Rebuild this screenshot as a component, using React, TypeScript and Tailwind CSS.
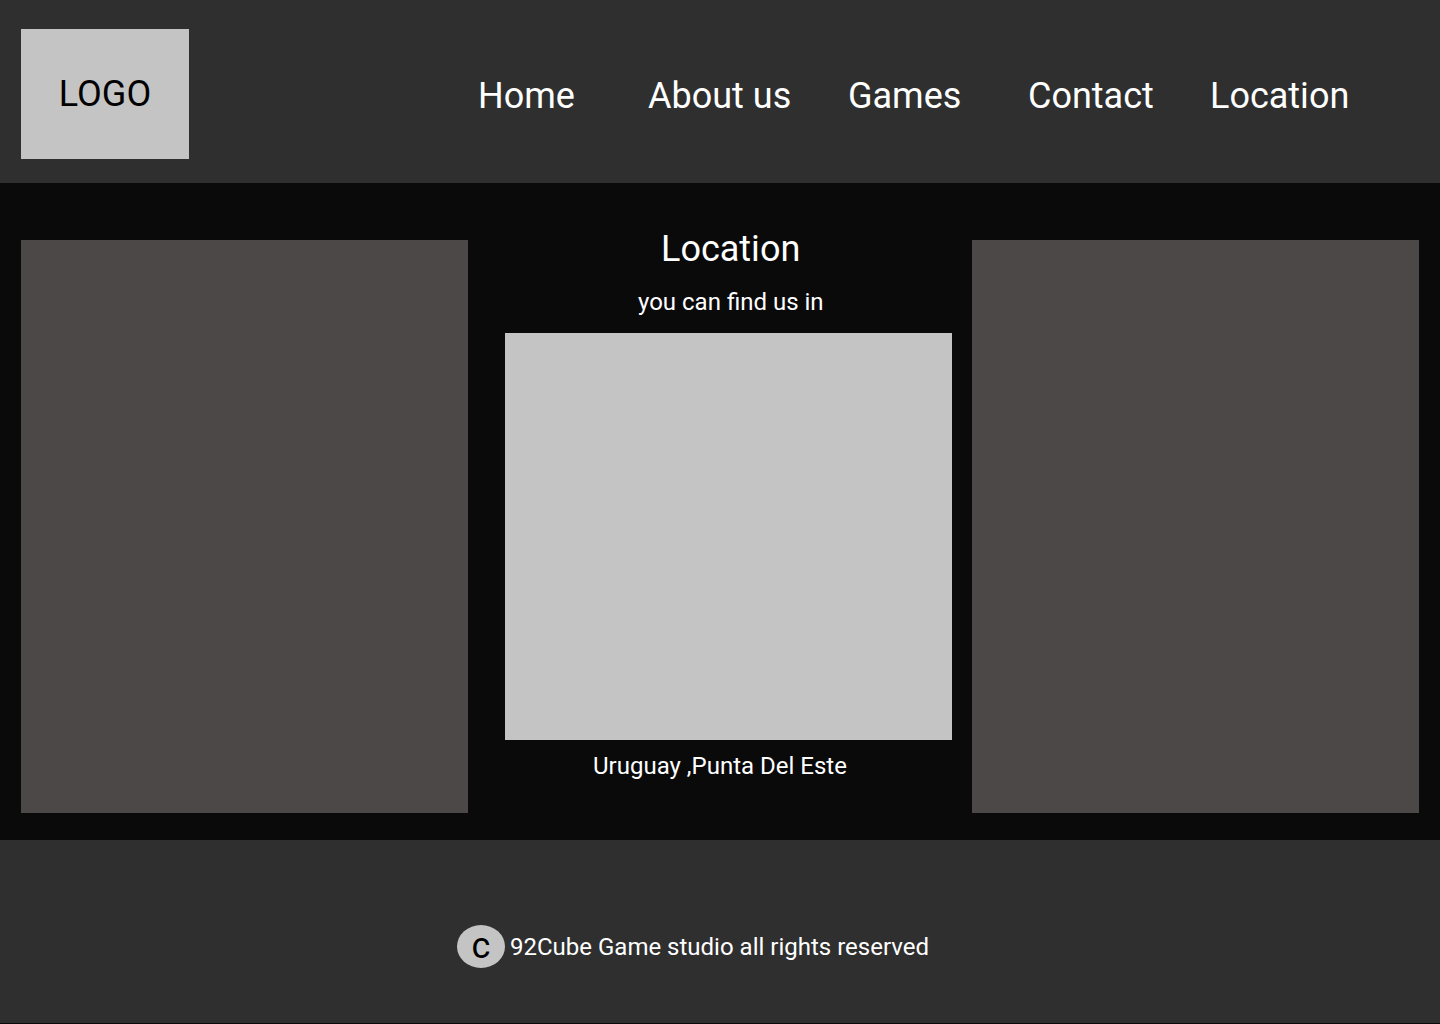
export default function App() {
  return (
    <div className="flex h-[1024px] w-[1440px] flex-col overflow-hidden bg-[#0a0a0a] font-[Roboto,sans-serif] text-white">
      <header className="flex h-[183px] shrink-0 bg-[#2f2f2f] pt-[29px] pl-[21px]">
        <div className="flex h-[130px] w-[168px] justify-center bg-[#c4c4c4] pt-[44px] text-[36px] leading-[42px] text-black">LOGO</div>
        <nav className="ml-[289px] flex pt-[46px] text-[36px] leading-[42px] whitespace-nowrap">
          <a className="w-[170px]">Home</a>
          <a className="w-[200px]">About us</a>
          <a className="w-[180px]">Games</a>
          <a className="w-[182px]">Contact</a>
          <a>Location</a>
        </nav>
      </header>
      <main className="flex h-[657px] shrink-0 pl-[21px]">
        <aside className="mt-[57px] h-[573px] w-[447px] bg-[#4d4848]" />
        <section className="mr-[20px] ml-[37px] w-[447px] whitespace-nowrap">
          <h1 className="mt-[45px] pl-[156px] text-[36px] leading-[42px]">Location</h1>
          <p className="mt-[18px] pl-[133px] text-[24px] leading-[28px]">you can find us in</p>
          <div className="mt-[17px] h-[407px] bg-[#c4c4c4]" />
          <p className="mt-[12px] pl-[88px] text-[24px] leading-[28px]">Uruguay ,Punta Del Este</p>
        </section>
        <aside className="mt-[57px] h-[573px] w-[447px] bg-[#4d4848]" />
      </main>
      <footer className="flex h-[183px] shrink-0 bg-[#2f2f2f] pt-[85px] pl-[457px]">
        <div className="flex h-[43px] w-[48px] justify-center rounded-[50%] bg-[#c4c4c4] text-[36px] leading-[42px] text-black">c</div>
        <p className="pt-[8px] pl-[5px] text-[24px] leading-[28px]">92Cube Game studio all rights reserved</p>
      </footer>
    </div>
  );
}
